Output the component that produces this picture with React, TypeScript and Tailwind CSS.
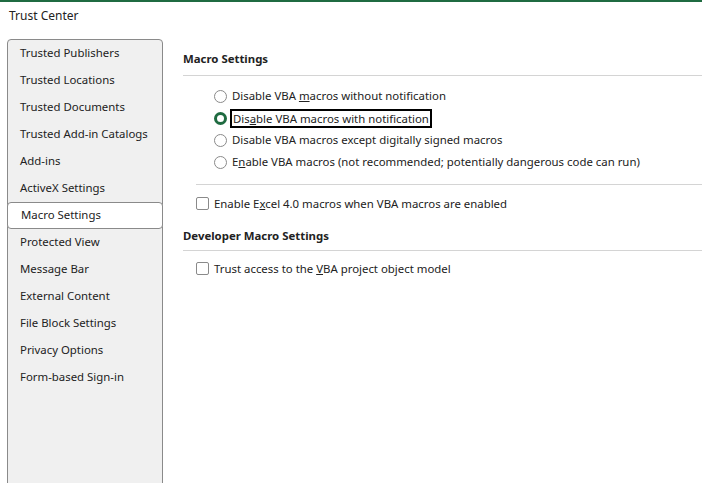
import React from "react";

const navItems = [
  "Trusted Publishers",
  "Trusted Locations",
  "Trusted Documents",
  "Trusted Add-in Catalogs",
  "Add-ins",
  "ActiveX Settings",
  "Macro Settings",
  "Protected View",
  "Message Bar",
  "External Content",
  "File Block Settings",
  "Privacy Options",
  "Form-based Sign-in",
];

function Radio({ checked }: { checked?: boolean }) {
  return checked ? (
    <span className="w-[13px] h-[13px] rounded-full border-[3.5px] border-[#1f6b41] bg-white shrink-0" />
  ) : (
    <span className="w-[13px] h-[13px] rounded-full border border-[#8a8a8a] bg-white shrink-0" />
  );
}

function Checkbox() {
  return <span className="w-[13px] h-[13px] rounded-[2px] border border-[#8a8a8a] bg-white shrink-0" />;
}

export default function App() {
  return (
    <div
      className="w-[702px] h-[483px] overflow-hidden bg-white text-[11.4px] text-[#222] flex flex-col"
      style={{ fontFamily: '"Noto Sans", "Open Sans", sans-serif' }}
    >
      <div className="h-[2px] bg-[#1f6b41] shrink-0" />
      <div className="h-[37px] shrink-0 pl-[9px] pt-[5px] text-[12px]">Trust Center</div>

      <div className="flex flex-1 min-h-0">
        {/* Sidebar */}
        <div className="ml-[7px] w-[156px] h-[500px] shrink-0 bg-[#f0f0f0] border border-[#8a8a8a] rounded-t-[4px] flex flex-col">
          {navItems.map((item) =>
            item === "Macro Settings" ? (
              <div
                key={item}
                className="h-[27px] -mx-px flex items-center pl-[13px] pb-px bg-white border border-[#8a8a8a] rounded-[4px]"
              >
                {item}
              </div>
            ) : (
              <div key={item} className="h-[27px] flex items-center pl-[12px] pb-px">
                {item}
              </div>
            )
          )}
        </div>

        {/* Main content */}
        <div className="flex-1 pl-[20px] flex flex-col">
          <div className="h-[36px] flex items-center pt-[3px] font-bold">Macro Settings</div>
          <div className="h-px bg-[#d4d4d4]" />

          <div className="pl-[31px] pt-[9px] flex flex-col">
            <div className="h-[22px] flex items-center gap-[5px]">
              <Radio />
              <span>
                Disable VBA <u>m</u>acros without notification
              </span>
            </div>
            <div className="h-[22px] flex items-center gap-[3px]">
              <Radio checked />
              <span className="border-2 border-black px-px leading-[15px]">
                Dis<u>a</u>ble VBA macros with notification
              </span>
            </div>
            <div className="h-[22px] flex items-center gap-[5px]">
              <Radio />
              <span>
                Disable VBA macros except di<u>g</u>itally signed macros
              </span>
            </div>
            <div className="h-[22px] flex items-center gap-[5px]">
              <Radio />
              <span>
                E<u>n</u>able VBA macros (not recommended; potentially dangerous code can run)
              </span>
            </div>
          </div>

          <div className="ml-[13px] mt-[11px] h-px bg-[#d4d4d4]" />

          <div className="pl-[13px] h-[37px] flex items-center gap-[5px]">
            <Checkbox />
            <span>
              Enable E<u>x</u>cel 4.0 macros when VBA macros are enabled
            </span>
          </div>

          <div className="h-[28px] flex items-center font-bold">Developer Macro Settings</div>
          <div className="h-px bg-[#d4d4d4]" />

          <div className="pl-[13px] h-[35px] flex items-center gap-[5px]">
            <Checkbox />
            <span>
              Trust access to the <u>V</u>BA project object model
            </span>
          </div>
        </div>
      </div>
    </div>
  );
}
